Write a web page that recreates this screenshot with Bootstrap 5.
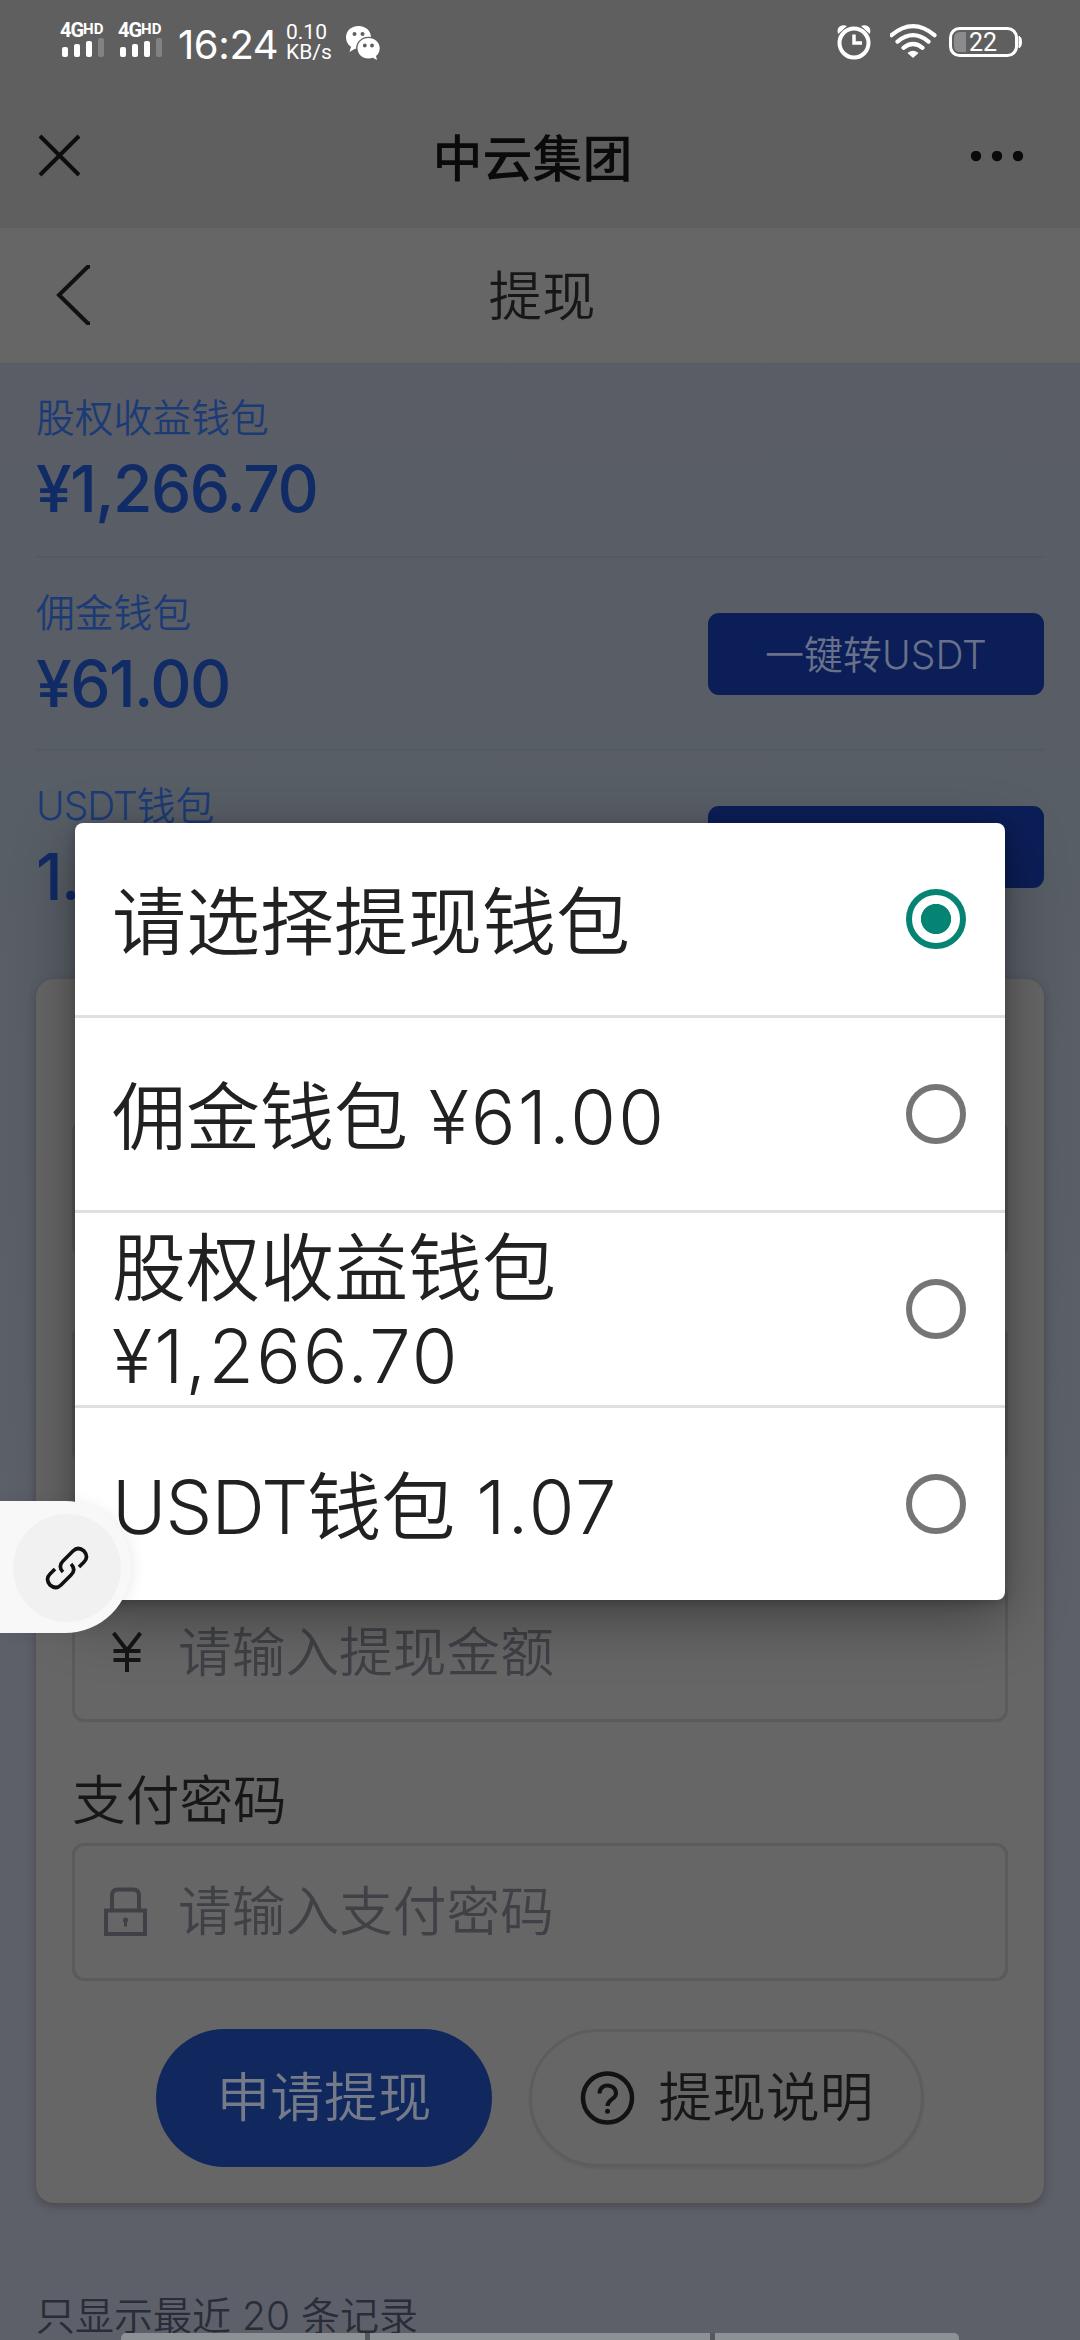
<!DOCTYPE html>
<html lang="zh-CN">
<head>
<meta charset="utf-8">
<meta name="viewport" content="width=device-width, initial-scale=1">
<title>提现</title>
<link href="https://cdn.jsdelivr.net/npm/bootstrap@5.3.0/dist/css/bootstrap.min.css" rel="stylesheet">
<style>
  html, body { height: 2340px; overflow: hidden; }
  body { font-family: Inter, "Noto Sans CJK SC", sans-serif; font-weight: 350; color: #171717; background: #5b5f67; line-height: 1; }
  svg { display: block; flex: none; }
  .screen { width: 1080px; height: 2340px; background: linear-gradient(#5a5d65 363px, #585e66 800px, #5d6069 1700px, #5d6069); }
  .statusbar { height: 86px; background: #5f5f5f; color: #fff; padding: 22px 58px 0 60px; }
  .sim { width: 58px; }
  .sim-label { font: 700 20px/16px Roboto, sans-serif; height: 16px; white-space: nowrap; letter-spacing: -1px; }
  .sim-label sup { font-size: 15px; top: -.22em; letter-spacing: 0; }
  .clock { font-size: 40px; font-weight: 400; line-height: 46px; width: 110px; padding-left: 2px; letter-spacing: -.4px; }
  .rate { font: 400 21px/20px Roboto, sans-serif; width: 59px; }
  .appbar { height: 142px; background: #5f5f5f; color: #0a0a0a; padding: 0 56px 0 38px; font-size: 50px; font-weight: 500; }
  .appbar-title { padding: 3px 0 0 14px; }
  .pagebar { height: 135px; background: #666; padding: 0 54px; border-bottom: 1px solid #62625f; font-size: 53.5px; }
  .wallets { padding: 0 36px; height: 616px; }
  .wallet { height: 193.2px; border-bottom: 2px solid #505b62; }
  .wallet:first-child { height: 195px; }
  .wallet:last-child { border-bottom: 0; }
  .wallet-name { font-size: 38.8px; line-height: 48px; color: #1c3b76; padding-top: 31px; }
  .wallet-sum { font-size: 64px; font-weight: 500; line-height: 64px; color: #102b66; letter-spacing: -1.5px; padding-top: 15px; }
  .convert { width: 336px; height: 82px; margin-top: 55px; border: 0; border-radius: 11px; background: #0b1e57; color: #69718a; font-size: 39px; font-weight: 350; line-height: 1; }
  .sheet { margin: 0 36px; height: 1224px; border: 0; border-radius: 18px; background: #666; padding: 141px 36px 0; box-shadow: 0 3px 8px rgba(40,30,30,.35); }
  .field { height: 138px; border: 3px solid #5b5b5c; border-radius: 12px; padding-left: 29px; font-size: 53.7px; color: #3f4146; }
  .field-icon { width: 74px; }
  .field-title { font-size: 53.7px; line-height: 121px; height: 121px; padding-top: 18px; }
  .pill { height: 138px; border-radius: 69px; font-size: 53.7px; font-weight: 350; line-height: 1; padding: 0; }
  .pill-main { width: 336px; background: #10285e; color: #747a88; border: 0; }
  .pill-help { width: 395px; border: 3px solid #5d5d5e; color: #171717; box-shadow: 0 2px 2px rgba(0,0,0,.06); }
  .history { font-size: 39px; line-height: 48px; color: #2a2c38; padding: 89px 36px 0; }
  .picker { left: 75px; top: 823px; width: 930px; border-radius: 8px; box-shadow: 0 18px 60px rgba(0,0,0,.36), 0 3px 12px rgba(0,0,0,.22); overflow: hidden; background: #fff; }
  .option { height: 195px; border: 0; border-bottom: 3px solid #e0e0e0; padding: 5px 39px 0 37px; font-size: 74px; line-height: 88px; color: #212121; }
  .option:last-child { height: 192px; border-bottom: 0; }
  .option .txt { width: 570px; }
  .sum { letter-spacing: 2.2px; }
  .unit { letter-spacing: -.9px; }
  .ring { width: 60px; height: 60px; border: 6px solid #757575; border-radius: 50%; margin-top: -5px; }
  .ring.on { border-color: #058473; background: radial-gradient(circle, #058473 14.7px, #fff 15.5px); }
  .floater { left: 0; top: 1501px; width: 131px; height: 132px; border-radius: 0 66px 66px 0; background: #f8f8f8; box-shadow: 3px 0 14px rgba(0,0,0,.07); padding: 2px 0 0 13px; }
  .floater-disc { width: 108px; height: 108px; border-radius: 50%; background: #f1f1f1; }
  .navstrip { left: 121px; top: 2333px; width: 838px; height: 7px; gap: 5px; background: #54575b; border-radius: 5px 5px 0 0; overflow: hidden; }
  .navstrip span { background: #8c9195; }
  .navstrip .side { width: 244px; }
</style>
</head>
<body>
<div class="screen position-relative overflow-hidden">
  <header>
    <div class="statusbar d-flex align-items-start">
      <div class="sim">
        <div class="sim-label">4G<sup>HD</sup></div>
        <svg width="44" height="20" fill="#fff"><rect x="2" y="9" width="6" height="10" rx="2"/><rect x="14" y="6" width="6" height="13" rx="2"/><rect x="26" y="3" width="6" height="16" rx="2"/><rect x="38" y="0" width="6" height="19" rx="2" opacity=".22"/></svg>
      </div>
      <div class="sim">
        <div class="sim-label">4G<sup>HD</sup></div>
        <svg width="44" height="20" fill="#fff"><rect x="2" y="9" width="6" height="10" rx="2"/><rect x="14" y="6" width="6" height="13" rx="2"/><rect x="26" y="3" width="6" height="16" rx="2"/><rect x="38" y="0" width="6" height="19" rx="2" opacity=".22"/></svg>
      </div>
      <div class="clock">16:24</div>
      <div class="rate">0.10<br>KB/s</div>
      <svg class="mt-1" width="36" height="36" viewBox="0 0 36 36">
        <path d="M13.500 0C6 0 1 5 1 11.500c0 3.800 1.800 7 5 9.300L4.500 26l5.500-3.200c1.200.3 2.300.4 3.500.4C21 23.200 26 18 26 11.500S21 0 13.500 0z" fill="#fff"/>
        <ellipse cx="23.500" cy="22.500" rx="12.500" ry="11.700" fill="#5f5f5f"/>
        <path d="M23.500 12C17 12 12.500 16.500 12.500 22.200S17 32.500 23.500 32.500c1.600 0 3-.3 4.300-.7L32 34l-1-4c2.400-1.900 3.700-4.600 3.700-7.800C34.700 16.500 30 12 23.500 12z" fill="#fff"/>
        <g fill="#5f5f5f"><circle cx="9.500" cy="8" r="2"/><circle cx="17.500" cy="8" r="2"/><circle cx="19.800" cy="19.500" r="1.900"/><circle cx="27" cy="19.500" r="1.900"/></g>
      </svg>
      <div class="d-flex ms-auto">
        <svg width="54" height="38" viewBox="0 0 54 38" fill="none" stroke="#fff"><circle cx="18" cy="21" r="14.500" stroke-width="4"/><path d="M18 12.500V21h8" stroke-width="3.500"/><path d="M2.200 12C0 6 4.500 1.500 11 4zM33.800 12C36 6 31.500 1.500 25 4z" fill="#fff" stroke="none"/></svg>
        <svg width="59" height="38" viewBox="0 0 59 38" fill="none" stroke="#fff" stroke-width="4.200" stroke-linecap="round"><path d="M1.500 13.200q21.500-18 43 0M7.500 19.600q15.500-12.800 31 0M13.500 25.800q9.500-7.600 19 0"/><path d="M18.500 31q4.500-3.200 9 0L23 35z" fill="#fff" stroke-width="1.500" stroke-linejoin="round"/></svg>
        <svg width="73" height="38" viewBox="0 0 73 38"><rect x="1.500" y="6.500" width="66" height="27" rx="9" fill="none" stroke="#fff" stroke-width="3"/><path d="M17 10v20h-6q-6 0-6-6v-8q0-6 6-6z" fill="#8b8b8b"/><path d="M70 14q2.500 1 2.500 6T70 26z" fill="#fff" stroke="#fff"/><text x="20" y="28.500" font-family="Roboto, sans-serif" font-size="25" font-weight="400" fill="#fff">22</text></svg>
      </div>
    </div>
    <div class="appbar d-flex align-items-center justify-content-between">
      <svg class="mb-1" width="43" height="43" viewBox="0 0 43 43" stroke="#0d0d0d" stroke-width="4"><path d="M2 2l39 39M41 2L2 41"/></svg>
      <div class="appbar-title">中云集团</div>
      <svg width="54" height="12" fill="#0a0a0a"><circle cx="6" cy="5" r="5.200"/><circle cx="27" cy="5" r="5.200"/><circle cx="48" cy="5" r="5.200"/></svg>
    </div>
    <div class="pagebar d-flex align-items-center justify-content-between">
      <svg width="36" height="60" viewBox="0 0 36 60" fill="none" stroke="#111" stroke-width="4"><path d="M36 1.500h-2L5 30l29 28.500h2"/></svg>
      <div class="pt-1">提现</div>
      <span class="ps-4 pe-2"></span>
    </div>
  </header>

  <main>
    <section class="wallets">
      <div class="wallet">
        <div class="wallet-name">股权收益钱包</div>
        <div class="wallet-sum">¥1,266.70</div>
      </div>
      <div class="wallet d-flex justify-content-between">
        <div>
          <div class="wallet-name">佣金钱包</div>
          <div class="wallet-sum">¥61.00</div>
        </div>
        <button class="btn convert">一键转USDT</button>
      </div>
      <div class="wallet d-flex justify-content-between">
        <div>
          <div class="wallet-name"><span class="unit">USDT</span>钱包</div>
          <div class="wallet-sum">1.07</div>
        </div>
        <button class="btn convert" aria-label="转换"></button>
      </div>
    </section>

    <form class="card sheet">
      <div class="field"></div>
      <div class="field-title"></div>
      <div class="field" style="margin-top:-54px"></div>
      <div class="field-title"></div>
      <div class="field d-flex align-items-center">
        <div class="field-icon text-dark ps-2">
          <svg width="30" height="42" viewBox="0 0 30 42" fill="none" stroke="#151515" stroke-width="4"><path d="M1.500 1L15 18.500 28.500 1M15 18v22M1.500 19h27M1.500 28h27"/></svg>
        </div>
        <div>请输入提现金额</div>
      </div>
      <div class="field-title">支付密码</div>
      <div class="field d-flex align-items-center">
        <div class="field-icon">
          <svg width="43" height="50" viewBox="0 0 43 50" fill="none" stroke="#3f4146" stroke-width="4"><path d="M8 23V8.500q0-6 6-6h15q6 0 6 6V23M2 23.500h39V47H2z"/><circle cx="21.500" cy="33" r="2.600" fill="#3f4146" stroke="none"/><path d="M21.500 33v6.500" stroke-width="3"/></svg>
        </div>
        <div>请输入支付密码</div>
      </div>
      <div class="d-flex justify-content-center mt-5" style="gap:37px">
        <button type="button" class="btn pill pill-main">申请提现</button>
        <button type="button" class="btn pill pill-help d-flex align-items-center justify-content-center gap-4">
          <svg width="55" height="55" viewBox="0 0 55 55" fill="none" stroke="#121212" stroke-width="4.500"><circle cx="27.500" cy="27" r="24.500"/><path d="M19.500 22.500c0-11 16.500-10.500 16.500 0 0 6-8.500 5.500-8.500 12.500" stroke-width="4"/><circle cx="27.500" cy="40.300" r="2.500" fill="#121212" stroke="none"/></svg>
          <span>提现说明</span>
        </button>
      </div>
    </form>
    <div class="history">只显示最近 20 条记录</div>
  </main>

  <div class="picker list-group position-absolute" role="radiogroup">
    <div class="option d-flex align-items-center justify-content-between"><div class="txt">请选择提现钱包</div><span class="ring on"></span></div>
    <div class="option d-flex align-items-center justify-content-between"><div class="txt">佣金钱包 <span class="sum">¥61.00</span></div><span class="ring"></span></div>
    <div class="option d-flex align-items-center justify-content-between"><div class="txt">股权收益钱包 <span class="sum">¥1,266.70</span></div><span class="ring"></span></div>
    <div class="option d-flex align-items-center justify-content-between"><div class="txt"><span class="unit">USDT</span>钱包 <span class="sum">1.07</span></div><span class="ring"></span></div>
  </div>

  <div class="floater position-absolute d-flex align-items-center">
    <div class="floater-disc d-flex align-items-center justify-content-center">
      <svg width="46" height="46" viewBox="0 0 46 46" fill="none" stroke="#111" stroke-width="3.600"><path d="M19 27q-5.500-5.500 0-11L29 6q5-5 11 0 5 6 0 11l-5 5M27 19q5.500 5.500 0 11L17 40q-5 5-11 0-5-6 0-11l5-5"/></svg>
    </div>
  </div>

  <div class="navstrip position-absolute d-flex"><span class="side"></span><span class="flex-fill"></span><span class="side"></span></div>
</div>
<script src="https://cdn.jsdelivr.net/npm/bootstrap@5.3.0/dist/js/bootstrap.bundle.min.js"></script>
</body>
</html>
